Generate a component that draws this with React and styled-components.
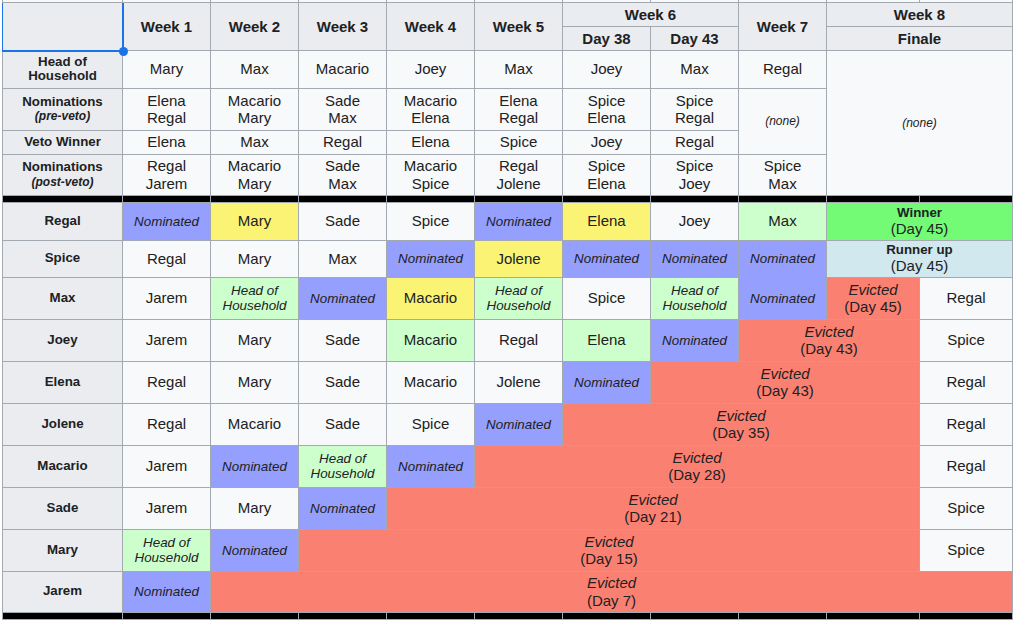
import React from 'react'
import styled, { createGlobalStyle } from 'styled-components'

const GlobalStyle = createGlobalStyle`
  html, body { margin: 0; padding: 0; background: #fff; }
  body { font-family: 'Liberation Sans', Arial, sans-serif; color: #202122; }
`

const tones = {
  plain: '#f8f9fa',
  nom: '#959ffd',
  veto: '#fbf373',
  hoh: '#ccffcc',
  win: '#73fb76',
  runner: '#d1e8ef',
  out: '#fa8072'
}

const Table = styled.table`
  border-collapse: collapse;
  table-layout: fixed;
  width: 1011px;
  margin-left: 2px;
  background: #f8f9fa;
  color: #202122;
  font-family: 'Liberation Sans', Arial, sans-serif;

  th, td {
    border: 1px solid #a2a9b1;
    padding: 0 4px;
    text-align: center;
    vertical-align: middle;
  }
`

const Row = styled.tr`
  height: ${p => p.$h}px;
`

const Clipped = styled.td`
  && { border-top: none; padding: 0; height: 1px; }
  background: #f8f9fa;
`

const Head = styled.th`
  background: #eaecf0;
  font-size: 15px;
  font-weight: bold;
  line-height: 17px;
`

const Corner = styled.th`
  background: #eaecf0;
  position: relative;
`

const Selection = styled.div`
  position: absolute;
  top: 0;
  left: -1px;
  right: -2px;
  bottom: -2px;
  border: 2px solid #1a73e8;
  border-top: none;
  border-left-width: 1px;
`

const Handle = styled.span`
  position: absolute;
  right: -6px;
  bottom: -6px;
  width: 9px;
  height: 9px;
  border-radius: 50%;
  background: #1a73e8;
`

const SideHead = styled.th`
  background: #eaecf0;
  font-size: 13.3px;
  font-weight: bold;
  line-height: 14.5px;
`

const Sub = styled.small`
  display: block;
  font-size: 12px;
  font-style: italic;
`

const Cell = styled.td`
  background: ${p => tones[p.$tone || 'plain']};
  font-size: 15px;
  line-height: 17.3px;
`

const Note = styled.i`
  font-size: 12px;
`

const Tag = styled.i`
  display: block;
  font-size: 13.4px;
  line-height: 15px;
`

const Title = styled.b`
  display: block;
  font-size: 13.3px;
  line-height: 15px;
`

const Gap = styled.td`
  && { background: #000; padding: 0; }
`

const Sep = () => (
  <Row $h={7}>
    {Array.from({ length: 11 }).map((_, i) => <Gap key={i} />)}
  </Row>
)

const summary = [
  { label: 'Head of Household', h: 38, cells: ['Mary', 'Max', 'Macario', 'Joey', 'Max', 'Joey', 'Max', 'Regal'] },
  { label: 'Nominations', sub: '(pre-veto)', h: 42, cells: [['Elena', 'Regal'], ['Macario', 'Mary'], ['Sade', 'Max'], ['Macario', 'Elena'], ['Elena', 'Regal'], ['Spice', 'Elena'], ['Spice', 'Regal']] },
  { label: 'Veto Winner', h: 24, cells: ['Elena', 'Max', 'Regal', 'Elena', 'Spice', 'Joey', 'Regal'] },
  { label: 'Nominations', sub: '(post-veto)', h: 41, cells: [['Regal', 'Jarem'], ['Macario', 'Mary'], ['Sade', 'Max'], ['Macario', 'Spice'], ['Regal', 'Jolene'], ['Spice', 'Elena'], ['Spice', 'Joey'], ['Spice', 'Max']] }
]

const N = { tone: 'nom', tag: 'Nominated' }
const H = { tone: 'hoh', tag: ['Head of', 'Household'] }
const y = name => ({ tone: 'veto', text: name })
const g = name => ({ tone: 'hoh', text: name })
const out = (day, span) => ({ tone: 'out', evicted: day, span })

const players = [
  { name: 'Regal', h: 38, cells: [N, y('Mary'), 'Sade', 'Spice', N, y('Elena'), 'Joey', g('Max'), { tone: 'win', title: 'Winner', day: 45, span: 2 }] },
  { name: 'Spice', h: 37, cells: ['Regal', 'Mary', 'Max', N, y('Jolene'), N, N, N, { tone: 'runner', title: 'Runner up', day: 45, span: 2 }] },
  { name: 'Max', h: 42, cells: ['Jarem', H, N, y('Macario'), H, 'Spice', H, N, out(45, 1), 'Regal'] },
  { name: 'Joey', h: 42, cells: ['Jarem', 'Mary', 'Sade', g('Macario'), 'Regal', g('Elena'), N, out(43, 2), 'Spice'] },
  { name: 'Elena', h: 42, cells: ['Regal', 'Mary', 'Sade', 'Macario', 'Jolene', N, out(43, 3), 'Regal'] },
  { name: 'Jolene', h: 42, cells: ['Regal', 'Macario', 'Sade', 'Spice', N, out(35, 4), 'Regal'] },
  { name: 'Macario', h: 42, cells: ['Jarem', N, H, N, out(28, 5), 'Regal'] },
  { name: 'Sade', h: 42, cells: ['Jarem', 'Mary', N, out(21, 6), 'Spice'] },
  { name: 'Mary', h: 42, cells: [H, N, out(15, 7), 'Spice'] },
  { name: 'Jarem', h: 41, cells: [N, out(7, 9)] }
]

const Lines = ({ items }) => items.map((t, i) => <React.Fragment key={i}>{i > 0 && <br />}{t}</React.Fragment>)

const Entry = ({ c }) => {
  if (typeof c === 'string') return <Cell>{c}</Cell>
  if (Array.isArray(c)) return <Cell><Lines items={c} /></Cell>
  if (c.tag) {
    return (
      <Cell $tone={c.tone}>
        <Tag>{Array.isArray(c.tag) ? <Lines items={c.tag} /> : c.tag}</Tag>
      </Cell>
    )
  }
  if (c.evicted) {
    return (
      <Cell $tone='out' colSpan={c.span}>
        <i>Evicted</i><br />(Day {c.evicted})
      </Cell>
    )
  }
  if (c.title) {
    return (
      <Cell $tone={c.tone} colSpan={c.span}>
        <Title>{c.title}</Title>(Day {c.day})
      </Cell>
    )
  }
  return <Cell $tone={c.tone}>{c.text}</Cell>
}

const weeks = ['Week 1', 'Week 2', 'Week 3', 'Week 4', 'Week 5']

const App = () => (
  <>
    <GlobalStyle />
    <Table>
      <colgroup>
        <col style={{ width: 120 }} />
        {Array.from({ length: 8 }).map((_, i) => <col key={i} style={{ width: 88 }} />)}
        <col style={{ width: 93 }} />
        <col style={{ width: 93 }} />
      </colgroup>
      <tbody>
        <Row $h={2}>
          {Array.from({ length: 11 }).map((_, i) => <Clipped key={i} />)}
        </Row>
        <Row $h={24}>
          <Corner rowSpan={2}><Selection /><Handle /></Corner>
          {weeks.map(w => <Head key={w} rowSpan={2}>{w}</Head>)}
          <Head colSpan={2}>Week 6</Head>
          <Head rowSpan={2}>Week 7</Head>
          <Head colSpan={2}>Week 8</Head>
        </Row>
        <Row $h={24}>
          <Head>Day 38</Head>
          <Head>Day 43</Head>
          <Head colSpan={2}>Finale</Head>
        </Row>
        {summary.map((r, i) => (
          <Row key={i} $h={r.h}>
            <SideHead>{r.label}{r.sub && <Sub>{r.sub}</Sub>}</SideHead>
            {r.cells.map((c, j) => <Entry key={j} c={c} />)}
            {i === 0 && <Cell colSpan={2} rowSpan={4}><Note>(none)</Note></Cell>}
            {i === 1 && <Cell rowSpan={2}><Note>(none)</Note></Cell>}
          </Row>
        ))}
        <Sep />
        {players.map(p => (
          <Row key={p.name} $h={p.h}>
            <SideHead>{p.name}</SideHead>
            {p.cells.map((c, j) => <Entry key={j} c={c} />)}
          </Row>
        ))}
        <Sep />
      </tbody>
    </Table>
  </>
)

export default App
